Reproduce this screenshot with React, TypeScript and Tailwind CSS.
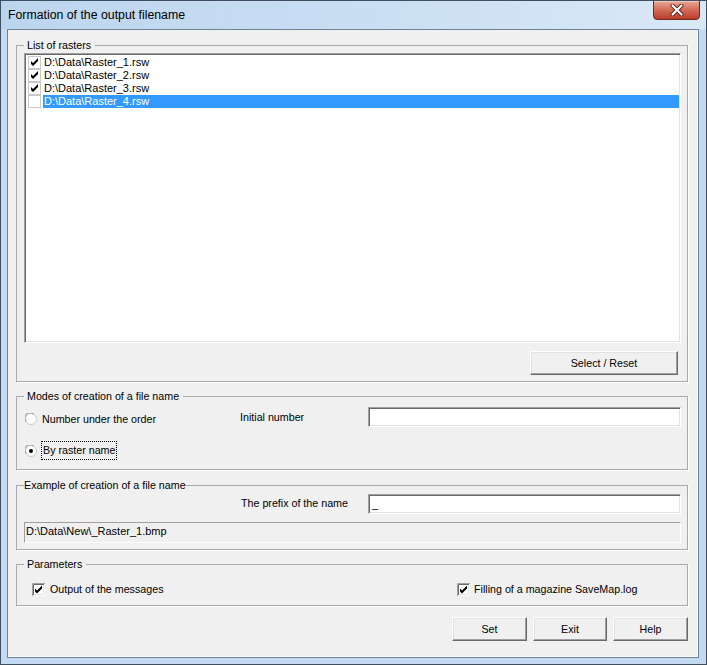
import React from "react";

const FONT = "font-['Liberation_Sans',Arial,Helvetica,sans-serif]";

function ListCheck({ on }: { on: boolean }) {
  return (
    <svg width="13" height="13" viewBox="0 0 13 13" className="shrink-0">
      <rect x="0.5" y="0.5" width="12" height="12" fill="#fff" stroke="#c9c9c9" />
      {on && <path d="M3 5 L5 7 L10 2 L10 5 L5 10 L3 8 Z" fill="#000" />}
    </svg>
  );
}

function ClassicCheck({ on }: { on: boolean }) {
  return (
    <svg width="13" height="13" viewBox="0 0 13 13" className="shrink-0">
      <rect x="0" y="0" width="13" height="13" fill="#fff" />
      <path d="M0 12.5 H12.5 V0" stroke="#ffffff" fill="none" />
      <path d="M1 11.5 H11.5 V1" stroke="#e3e3e3" fill="none" />
      <path d="M0.5 13 V0.5 H13" stroke="#a0a0a0" fill="none" />
      <path d="M1.5 12 V1.5 H12" stroke="#696969" fill="none" />
      {on && <path d="M3 5.5 L5 7.5 L10 2.5 L10 5.5 L5 10.5 L3 8.5 Z" fill="#000" />}
    </svg>
  );
}

function Radio({ on }: { on: boolean }) {
  return (
    <svg width="12" height="12" viewBox="0 0 12 12" className="shrink-0">
      <circle cx="6" cy="6" r="5.5" fill="#fff" stroke="#c8c8c8" />
      <path d="M1.2 8.6 A5 5 0 0 1 8.6 1.2" stroke="#8a8a8a" fill="none" />
      {on && <circle cx="6" cy="6" r="2" fill="#000" />}
    </svg>
  );
}

function Btn({ w, children }: { w: string; children: React.ReactNode }) {
  return (
    <div
      className={`${w} h-[24px] flex items-center justify-center bg-[#f0f0f0] border border-t-[#ffffff] border-l-[#ffffff] border-r-[#696969] border-b-[#696969] shadow-[inset_-1px_-1px_0_#a0a0a0,inset_1px_1px_0_#e3e3e3] text-[10.7px] leading-[13px] text-black`}
    >
      {children}
    </div>
  );
}

function Field({ w, children }: { w: string; children?: React.ReactNode }) {
  return (
    <div
      className={`${w} h-[20px] bg-white border border-t-[#a0a0a0] border-l-[#a0a0a0] border-r-[#ffffff] border-b-[#ffffff] shadow-[inset_1px_1px_0_#696969,inset_-1px_-1px_0_#e3e3e3] flex items-center pl-[3px] text-[11px] leading-[13px]`}
    >
      {children}
    </div>
  );
}

function Group({
  title,
  tight,
  className,
  children,
}: {
  title: string;
  tight?: boolean;
  className?: string;
  children: React.ReactNode;
}) {
  return (
    <fieldset
      className={`w-[672px] border border-[#a9a9a9] shadow-[1px_1px_0_#ffffff] p-0 m-0 min-w-0 ${className ?? ""}`}
    >
      <legend
        className={`${tight ? "ml-[7px] px-0" : "ml-[7px] pl-[3px] pr-[4px]"} text-[10.7px] leading-[13px] text-black`}
      >
        {title}
      </legend>
      {children}
    </fieldset>
  );
}

const rasters = [
  { name: "D:\\Data\\Raster_1.rsw", on: true },
  { name: "D:\\Data\\Raster_2.rsw", on: true },
  { name: "D:\\Data\\Raster_3.rsw", on: true },
  { name: "D:\\Data\\Raster_4.rsw", on: false, sel: true },
];

export default function App() {
  return (
    <div className={`${FONT} w-[707px] h-[665px] flex flex-col bg-[#c3daf2] border border-[#3f4f60] text-black overflow-hidden`}>
      {/* title bar */}
      <div className="h-[28px] flex items-start bg-gradient-to-r from-[#bcd5ee] via-[#c9def3] to-[#d9e8f6]">
        <div className="pl-[7px] pt-[6px] text-[12.3px] leading-[16px] text-black">
          Formation of the output filename
        </div>
        <div className="ml-auto mr-[6px] -mt-[1px] w-[47px] h-[20px] rounded-b-[4px] border border-[#6a2b22] bg-gradient-to-b from-[#e8a897] via-[#d36b58] to-[#b93b29] shadow-[inset_0_1px_0_#f3c8bc] flex items-center justify-center">
          <svg width="14" height="12" viewBox="0 0 14 12">
            <path d="M2.5 1.5 L11.5 10.5 M11.5 1.5 L2.5 10.5" stroke="#5a1f18" strokeWidth="4" strokeLinecap="round" />
            <path d="M2.5 1.5 L11.5 10.5 M11.5 1.5 L2.5 10.5" stroke="#ffffff" strokeWidth="2.2" strokeLinecap="round" />
          </svg>
        </div>
      </div>

      {/* client */}
      <div className="flex-1 ml-[6px] mr-[7px] mb-[6px] border border-[#6d8197] bg-[#f0f0f0] flex flex-col pl-[8px] pt-[9px] shadow-[inset_-1px_-1px_0_#ffffff]">
        {/* List of rasters */}
        <Group title="List of rasters">
          <div className="pl-[7px] pr-[6px] pb-[6px] flex flex-col">
            <div className="mt-[1px] w-[657px] h-[290px] bg-white border border-t-[#a0a0a0] border-l-[#a0a0a0] border-r-[#ffffff] border-b-[#ffffff] shadow-[inset_1px_1px_0_#696969,inset_-1px_-1px_0_#e3e3e3] pt-[2px] pl-[3px] pr-[1px] flex flex-col">
              {rasters.map((r) => (
                <div key={r.name} className="h-[13px] flex items-center">
                  <ListCheck on={r.on} />
                  <div
                    className={`ml-[2px] flex-1 h-[13px] px-[1px] text-[11px] leading-[13px] ${
                      r.sel ? "bg-[#3399ff] text-white" : "text-black"
                    }`}
                  >
                    {r.name}
                  </div>
                </div>
              ))}
            </div>
            <div className="mt-[8px] flex justify-end pr-[3px]">
              <Btn w="w-[148px]">Select / Reset</Btn>
            </div>
          </div>
        </Group>

        {/* Modes */}
        <Group title="Modes of creation of a file name" className="mt-[8px]">
          <div className="pl-[8px] pr-[6px] pb-[9px] flex flex-col">
            <div className="mt-[4px] h-[20px] flex items-center">
              <div className="w-[215px] flex items-center gap-[5px] text-[10.7px] leading-[13px] mt-[4px]">
                <Radio on={false} />
                <span>Number under the order</span>
              </div>
              <div className="w-[128px] text-[10.7px] leading-[13px] mt-[1px]">Initial number</div>
              <Field w="w-[313px]" />
            </div>
            <div className="mt-[14px] h-[19px] flex items-center gap-[4px]">
              <Radio on={true} />
              <span className="border border-dotted border-black px-[1px] h-[19px] flex items-center text-[10.7px] leading-[13px]">
                By raster name
              </span>
            </div>
          </div>
        </Group>

        {/* Example */}
        <Group title="Example of creation of a file name" tight className="mt-[9px]">
          <div className="pl-[7px] pr-[6px] pb-[6px] flex flex-col">
            <div className="mt-[2px] h-[20px] flex items-center">
              <div className="w-[217px]" />
              <div className="w-[127px] text-[10.7px] leading-[13px] -mt-[1px]">The prefix of the name</div>
              <Field w="w-[313px]">_</Field>
            </div>
            <div className="mt-[8px] w-[657px] h-[21px] border border-t-[#a0a0a0] border-l-[#a0a0a0] border-r-[#ffffff] border-b-[#ffffff] flex items-center pl-[1px] pb-[3px] text-[11px] leading-[13px]">
              D:\Data\New\_Raster_1.bmp
            </div>
          </div>
        </Group>

        {/* Parameters */}
        <Group title="Parameters" className="mt-[8px]">
          <div className="pl-[15px] pb-[9px] flex items-center mt-[12px] h-[13px] box-content">
            <div className="w-[425px] flex items-center gap-[5px] text-[10.7px] leading-[13px]">
              <ClassicCheck on={true} />
              <span>Output of the messages</span>
            </div>
            <div className="flex items-center gap-[4px] text-[10.7px] leading-[13px]">
              <ClassicCheck on={true} />
              <span>Filling of a magazine SaveMap.log</span>
            </div>
          </div>
        </Group>

        {/* Buttons */}
        <div className="w-[672px] mt-[11px] flex justify-end gap-[6px]">
          <Btn w="w-[75px]">Set</Btn>
          <Btn w="w-[74px]">Exit</Btn>
          <Btn w="w-[75px]">Help</Btn>
        </div>
      </div>
    </div>
  );
}
